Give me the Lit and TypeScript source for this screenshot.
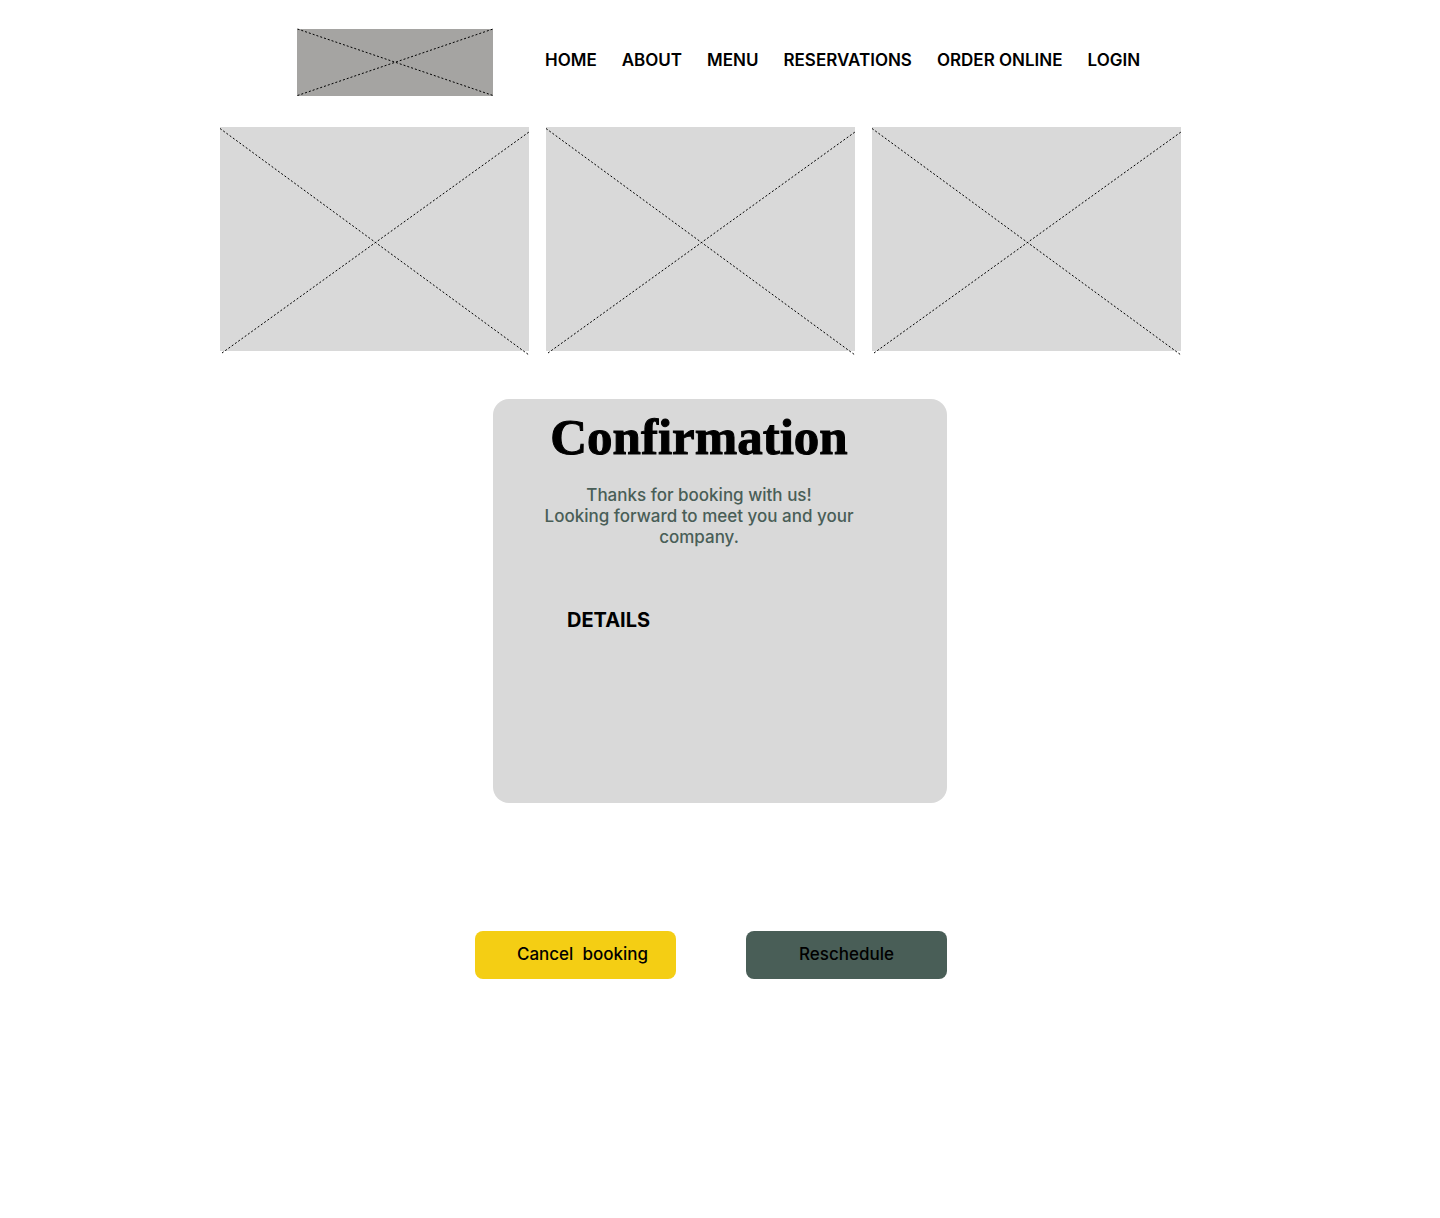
import { LitElement, html, css } from "lit";
import { customElement, property } from "lit/decorators.js";

@customElement("placeholder-tile")
export class PlaceholderTile extends LitElement {
  @property() kind = "photo";

  static styles = css`
    :host { display: block; background: #d9d9d9; }
    :host([kind="logo"]) { background: #a5a4a2; }
    .cross {
      display: block;
      width: 100%;
      height: 100%;
      overflow: visible;
      fill: none;
      stroke: #000;
      stroke-width: 1;
      stroke-dasharray: 2 2;
    }
  `;

  render() {
    return this.kind === "logo"
      ? html`<svg class="cross" viewBox="0 0 196 67" preserveAspectRatio="none" aria-hidden="true">
          <path d="M0.5 0 196 66.5M0.5 66.5 196 0" />
        </svg>`
      : html`<svg class="cross" viewBox="0 0 309 224" preserveAspectRatio="none" aria-hidden="true">
          <path d="M0 1.5 309 228M2 226 309 5" />
        </svg>`;
  }
}

@customElement("app-root")
export class AppRoot extends LitElement {
  static styles = css`
    :host {
      display: block;
      min-height: 100vh;
      background: #fff;
      color: #000;
      font-family: Inter, "Liberation Sans", sans-serif;
      font-size: 17px;
      font-weight: 500;
      line-height: 21px;
    }
    .page {
      box-sizing: border-box;
      max-width: 1000px;
      margin: 0 auto;
      padding-top: 29px;
    }
    .header {
      display: flex;
      align-items: flex-start;
      gap: 52px;
      padding-left: 77px;
    }
    .logo { flex: none; width: 196px; height: 67px; }
    .nav {
      display: flex;
      flex-wrap: wrap;
      gap: 8px 25px;
      padding-top: 21px;
      font-weight: 600;
    }
    .link { color: inherit; text-decoration: none; white-space: nowrap; }
    .gallery {
      display: grid;
      grid-template-columns: repeat(3, 1fr);
      gap: 17px;
      margin-top: 31px;
      padding-right: 39px;
    }
    .photo { aspect-ratio: 309 / 224; }
    .card {
      box-sizing: border-box;
      max-width: 454px;
      min-height: 404px;
      margin: 48px auto 0;
      padding: 8px 88px 24px 46px;
      border-radius: 16px;
      background: #d9d9d9;
    }
    .title {
      margin: 0;
      font-family: "Liberation Serif", serif;
      font-size: 51px;
      font-weight: 700;
      line-height: 60px;
      text-align: center;
      -webkit-text-stroke: 1px #000;
    }
    .message {
      margin: 18px 0 0;
      color: #495e57;
      text-align: center;
    }
    .subtitle {
      margin: 60px 0 0 28px;
      font-size: 20px;
      font-weight: 700;
      line-height: 24px;
    }
    .actions {
      display: flex;
      gap: 70px;
      margin: 128px 0 0 255px;
    }
    .button {
      box-sizing: border-box;
      width: 201px;
      height: 48px;
      padding: 0 0 2px;
      border: 0;
      border-radius: 8px;
      color: #000;
      font: inherit;
      white-space: pre;
      cursor: pointer;
    }
    .cancel { padding-left: 14px; background: #f4ce14; }
    .reschedule { background: #495e57; }
  `;

  private links = ["HOME", "ABOUT", "MENU", "RESERVATIONS", "ORDER ONLINE", "LOGIN"];

  render() {
    return html`
      <div class="page">
        <header class="header">
          <placeholder-tile class="logo" kind="logo"></placeholder-tile>
          <nav class="nav">
            ${this.links.map((label) => html`<a class="link" href="#">${label}</a>`)}
          </nav>
        </header>
        <main>
          <div class="gallery">
            ${[0, 1, 2].map(() => html`<placeholder-tile class="photo"></placeholder-tile>`)}
          </div>
          <section class="card">
            <h1 class="title">Confirmation</h1>
            <p class="message">Thanks for booking with us!<br />Looking forward to meet you and your company.</p>
            <h2 class="subtitle">DETAILS</h2>
          </section>
          <div class="actions">
            <button class="button cancel" type="button">Cancel&nbsp; booking</button>
            <button class="button reschedule" type="button">Reschedule</button>
          </div>
        </main>
      </div>
    `;
  }
}
